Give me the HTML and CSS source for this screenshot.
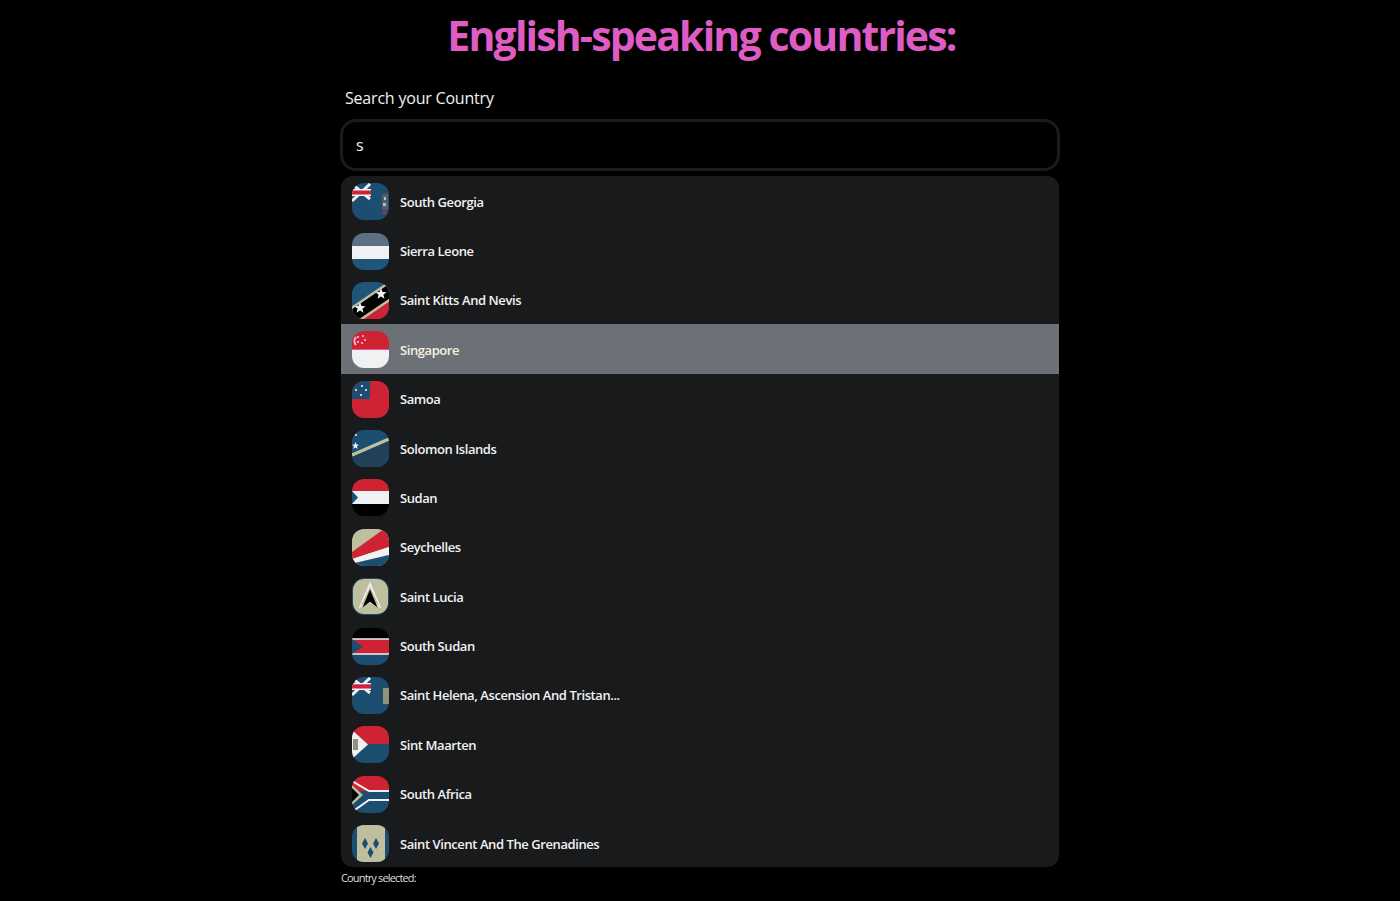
FILE: index.html
```html
<!DOCTYPE html>
<html lang="en">
  <head>
    <meta charset="UTF-8" />
    <title>English-speaking countries</title>
    <link rel="stylesheet" href="styles.css">
  </head>
  <body>
    <h1>English-speaking countries:</h1>
    <div class="picker">
      <label class="search-label" for="search">Search your Country</label>
      <input id="search" class="search" type="text" value="s">
      <ul class="list">
        <li class="row">
          <svg class="flag" viewBox="0 0 37 37"><rect width="37" height="37" fill="#1c4e72"/><path d="M0 18L18 1M0 1L18 16" stroke="#f0f1f3" stroke-width="3"/><rect y="6" width="19" height="7" fill="#f0f1f3"/><rect y="7.500" width="19" height="4" fill="#ce2333"/><path d="M30 11h6v16h-6z" fill="#4d5f6e"/><path d="M32 14h2v3h-2zM31 20h3v3h-3z" fill="#b9bdb8"/><rect x="31" y="28" width="3" height="3" fill="#ce2333"/></svg>
          <span>South Georgia</span>
        </li>
        <li class="row">
          <svg class="flag" viewBox="0 0 37 37"><rect width="37" height="13" fill="#5d6f82"/><rect y="13" width="37" height="13" fill="#f0f1f3"/><rect y="26" width="37" height="11" fill="#1f5578"/></svg>
          <span>Sierra Leone</span>
        </li>
        <li class="row">
          <svg class="flag" viewBox="0 0 37 37"><rect width="37" height="37" fill="#1f5578"/><path d="M37 14V37H8Z" fill="#ce2333"/><path d="M-2 36L39 8" stroke="#bfbf9f" stroke-width="17"/><path d="M-2 36L39 8" stroke="#000" stroke-width="12"/><path d="M29 6l1.500 4 4 .2-3.100 2.500 1.100 4-3.500-2.300-3.500 2.300 1.100-4-3.100-2.500 4-.2zM8 20l1.500 4 4 .2-3.100 2.500 1.100 4-3.500-2.300-3.500 2.300 1.100-4-3.100-2.500 4-.2z" fill="#f0f1f3"/></svg>
          <span>Saint Kitts And Nevis</span>
        </li>
        <li class="row active">
          <svg class="flag" viewBox="0 0 37 37"><rect width="37" height="19" fill="#ce2333"/><rect y="19" width="37" height="18" fill="#f0f1f3"/><rect y="18" width="37" height="1" fill="#e8559a"/><path d="M4 6a6 6 0 0 0 0 8" fill="none" stroke="#f3b7d4" stroke-width="2"/><circle cx="6" cy="6" r="1" fill="#f3d0e2"/><circle cx="11" cy="5" r="1" fill="#f3d0e2"/><circle cx="13" cy="9" r="1" fill="#f3d0e2"/><circle cx="10" cy="12" r="1" fill="#f3d0e2"/><circle cx="6" cy="11" r="1" fill="#f3d0e2"/></svg>
          <span>Singapore</span>
        </li>
        <li class="row">
          <svg class="flag" viewBox="0 0 37 37"><rect width="37" height="37" fill="#ce2333"/><rect width="18" height="18" fill="#1c4e72"/><circle cx="10" cy="5" r="1.100" fill="#f0f1f3"/><circle cx="4" cy="9" r="1.100" fill="#f0f1f3"/><circle cx="14" cy="9" r="1.100" fill="#f0f1f3"/><circle cx="9" cy="14" r="1.100" fill="#f0f1f3"/></svg>
          <span>Samoa</span>
        </li>
        <li class="row">
          <svg class="flag" viewBox="0 0 37 37"><rect width="37" height="37" fill="#1c4e72"/><path d="M0 37V26L37 10V37Z" fill="#21405a"/><path d="M0 25L37 9" stroke="#bfbf9f" stroke-width="3"/><path d="M3.500 12l1 2.500 2.500.2-2 1.600.7 2.600-2.200-1.500-2.200 1.500.7-2.600-2-1.600 2.500-.2z" fill="#f0f1f3"/><circle cx="4" cy="5" r="1" fill="#f0f1f3"/></svg>
          <span>Solomon Islands</span>
        </li>
        <li class="row">
          <svg class="flag" viewBox="0 0 37 37"><rect width="37" height="13" fill="#ce2333"/><rect y="12" width="37" height="13" fill="#f0f1f3"/><rect y="25" width="37" height="12" fill="#000"/><path d="M0 12L6 18.500L0 25Z" fill="#1c4e72"/></svg>
          <span>Sudan</span>
        </li>
        <li class="row">
          <svg class="flag" viewBox="0 0 37 37"><rect width="37" height="37" fill="#bfbf9f"/><path d="M0 23L32 0H37V18L0 30Z" fill="#ce2333"/><path d="M0 30L37 18V26L3 34Z" fill="#f0f1f3"/><path d="M3 34L37 26V37H3Z" fill="#1c4e72"/></svg>
          <span>Seychelles</span>
        </li>
        <li class="row">
          <svg class="flag lucia" viewBox="0 0 37 37"><rect width="37" height="37" fill="#bfbf9f"/><path d="M18 3L30 31L18 25L6 31Z" fill="#f0f1f3"/><path d="M18 8L28 29L18 22L8 29Z" fill="#bfbf9f"/><path d="M18 11L26 30L18 24L10 30Z" fill="#000"/></svg>
          <span>Saint Lucia</span>
        </li>
        <li class="row">
          <svg class="flag" viewBox="0 0 37 37"><rect width="37" height="11" fill="#000"/><rect y="11" width="37" height="15" fill="#ce2333"/><rect y="26" width="37" height="11" fill="#1c4e72"/><path d="M0 11H37M0 26H37" stroke="#f0f1f3" stroke-width="1.500"/><path d="M0 11L11 18.500L0 26Z" fill="#1c4e72"/></svg>
          <span>South Sudan</span>
        </li>
        <li class="row">
          <svg class="flag" viewBox="0 0 37 37"><rect width="37" height="37" fill="#1c4e72"/><path d="M0 18L18 1M0 1L18 16" stroke="#f0f1f3" stroke-width="3"/><rect y="6" width="19" height="7" fill="#f0f1f3"/><rect y="7.500" width="19" height="4" fill="#ce2333"/><rect y="7" width="19" height="1" fill="#e8559a"/><rect x="31" y="11" width="6" height="16" fill="#8f927c"/></svg>
          <span>Saint Helena, Ascension And Tristan...</span>
        </li>
        <li class="row">
          <svg class="flag" viewBox="0 0 37 37"><rect width="37" height="19" fill="#ce2333"/><rect y="18" width="37" height="19" fill="#1c4e72"/><path d="M0 4L16 18.500L0 33Z" fill="#f0f1f3"/><path d="M1 13H6V24H1Z" fill="#8f927c"/></svg>
          <span>Sint Maarten</span>
        </li>
        <li class="row">
          <svg class="flag" viewBox="0 0 37 37"><rect width="37" height="15" fill="#ce2333"/><rect y="15" width="37" height="22" fill="#1c4e72"/><path d="M0 5L17 15H37M0 36L17 24H37" fill="none" stroke="#f0f1f3" stroke-width="2"/><path d="M0 9L11 19L0 29Z" fill="#bfbf9f"/><path d="M0 12L7 19L0 26Z" fill="#000"/></svg>
          <span>South Africa</span>
        </li>
        <li class="row">
          <svg class="flag" viewBox="0 0 37 37"><rect width="37" height="37" fill="#1c4e72"/><rect x="5" width="28" height="37" fill="#bfbf9f"/><path d="M13 13l3 5.500-3 5.500-3-5.500zM24 13l3 5.500-3 5.500-3-5.500zM18.500 22l3 5.500-3 5.500-3-5.500z" fill="#1c4e72"/></svg>
          <span>Saint Vincent And The Grenadines</span>
        </li>
      </ul>
      <p class="selected">Country selected:</p>
    </div>
  </body>
</html>
```

FILE: styles.css
```css
html, body {
  height: 100%;
}
body {
  margin: 0;
  background: #000;
  color: #f2f2f2;
  font-family: "Open Sans", "Noto Sans", sans-serif;
  overflow: hidden;
}
h1 {
  margin: 0;
  padding: 9px 0 0 3px;
  height: 73px;
  box-sizing: border-box;
  text-align: center;
  font-size: 41px;
  line-height: 53px;
  font-weight: 700;
  letter-spacing: -1.85px;
  color: #df5cc4;
}
.picker {
  width: 718px;
  margin: 0 auto;
}
.search-label {
  display: block;
  padding-left: 4px;
  height: 46px;
  padding-top: 14px;
  box-sizing: border-box;
  font-size: 16px;
  line-height: 22px;
  letter-spacing: -0.2px;
}
.search {
  display: block;
  width: 720px;
  height: 52px;
  margin: 0 0 5px -1px;
  padding: 0 13px;
  box-sizing: border-box;
  background: #000;
  border: 3px solid #1a1b1e;
  border-radius: 16px;
  color: #f2f2f2;
  font-family: inherit;
  font-size: 16px;
  outline: none;
}
.list {
  list-style: none;
  margin: 0;
  padding: 0;
  background: #191a1c;
  border-radius: 12px;
  overflow: hidden;
}
.row {
  display: flex;
  align-items: center;
  gap: 11px;
  height: 49.375px;
  padding: 2px 0 0 11px;
  box-sizing: border-box;
  font-size: 13px;
  font-weight: 600;
  letter-spacing: -0.42px;
}
.row.active {
  background: #6c7177;
  color: #f3f3e0;
}
.flag {
  width: 37px;
  height: 37px;
  border-radius: 12px;
  flex-shrink: 0;
}
.lucia {
  border: 1px solid #1c4e72;
  box-sizing: border-box;
}
.selected {
  margin: 3px 0 0;
  font-size: 11px;
  line-height: 15px;
  letter-spacing: -0.85px;
  color: #ddd;
}
```
